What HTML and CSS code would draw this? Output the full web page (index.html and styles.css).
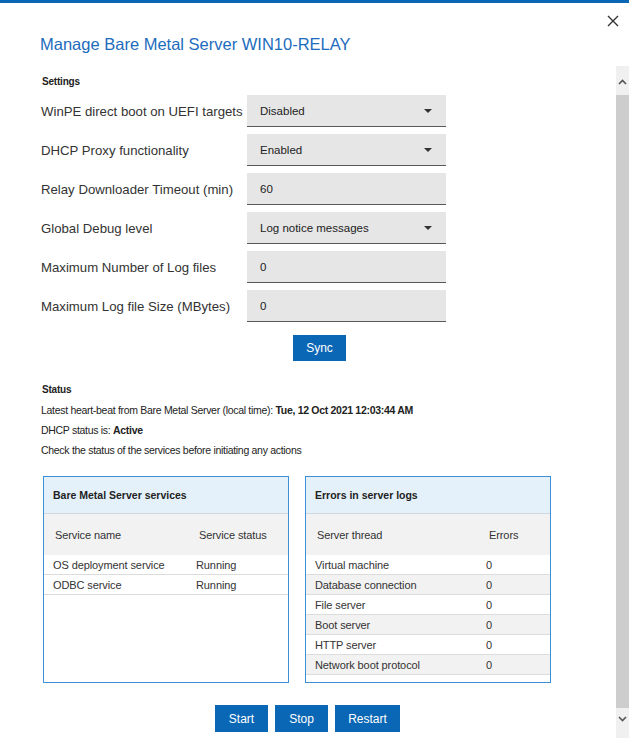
FILE: index.html
```html
<!DOCTYPE html>
<html>
<head>
<meta charset="utf-8">
<link rel="stylesheet" href="styles.css">
</head>
<body>
<div class="topbar"></div>
<div class="header">
  <h1 class="title">Manage Bare Metal Server WIN10-RELAY</h1>
  <button class="close" aria-label="Close">
    <svg width="12" height="12" viewBox="0 0 12 12"><path d="M1 1L11 11M11 1L1 11" stroke="#333" stroke-width="1.4" fill="none"/></svg>
  </button>
</div>
<div class="body">
  <div class="content">
    <div class="section-title">Settings</div>
    <div class="form">
      <div class="row"><span class="label">WinPE direct boot on UEFI targets</span><div class="field select">Disabled<span class="caret"></span></div></div>
      <div class="row"><span class="label">DHCP Proxy functionality</span><div class="field select">Enabled<span class="caret"></span></div></div>
      <div class="row"><span class="label">Relay Downloader Timeout (min)</span><div class="field">60</div></div>
      <div class="row"><span class="label">Global Debug level</span><div class="field select">Log notice messages<span class="caret"></span></div></div>
      <div class="row"><span class="label">Maximum Number of Log files</span><div class="field">0</div></div>
      <div class="row"><span class="label">Maximum Log file Size (MBytes)</span><div class="field">0</div></div>
    </div>
    <div class="sync-row"><button class="btn">Sync</button></div>

    <div class="section-title status-title">Status</div>
    <div class="line">Latest heart-beat from Bare Metal Server (local time): <b>Tue, 12 Oct 2021 12:03:44 AM</b></div>
    <div class="line">DHCP status is: <b>Active</b></div>
    <div class="line">Check the status of the services before initiating any actions</div>

    <div class="panels">
      <div class="panel svc">
        <div class="panel-head">Bare Metal Server services</div>
        <div class="thead"><span class="c1">Service name</span><span>Service status</span></div>
        <div class="tr"><span class="c1">OS deployment service</span><span>Running</span></div>
        <div class="tr"><span class="c1">ODBC service</span><span>Running</span></div>
      </div>
      <div class="panel err">
        <div class="panel-head">Errors in server logs</div>
        <div class="thead"><span class="c1">Server thread</span><span>Errors</span></div>
        <div class="tr"><span class="c1">Virtual machine</span><span>0</span></div>
        <div class="tr alt"><span class="c1">Database connection</span><span>0</span></div>
        <div class="tr"><span class="c1">File server</span><span>0</span></div>
        <div class="tr alt"><span class="c1">Boot server</span><span>0</span></div>
        <div class="tr"><span class="c1">HTTP server</span><span>0</span></div>
        <div class="tr alt"><span class="c1">Network boot protocol</span><span>0</span></div>
      </div>
    </div>

    <div class="actions">
      <button class="btn">Start</button>
      <button class="btn">Stop</button>
      <button class="btn wide">Restart</button>
    </div>
  </div>
  <div class="scrollbar">
    <div class="sb-arrow up"><svg width="9" height="6" viewBox="0 0 9 6"><path d="M1 5L4.5 1.5L8 5" stroke="#555" stroke-width="1.6" fill="none"/></svg></div>
    <div class="sb-thumb"></div>
    <div class="sb-arrow down"><svg width="9" height="6" viewBox="0 0 9 6"><path d="M1 1L4.5 4.5L8 1" stroke="#555" stroke-width="1.6" fill="none"/></svg></div>
  </div>
</div>
</body>
</html>
```
FILE: styles.css
```css
* { box-sizing: border-box; }
html, body { margin: 0; padding: 0; background: #fff; }
body {
  font-family: "Liberation Sans", Arial, sans-serif;
  color: #333;
  width: 629px;
  height: 738px;
  overflow: hidden;
}
.topbar { height: 3px; background: #0a67b5; }
.header {
  height: 63px;
  position: relative;
  padding: 30px 0 0 40px;
}
.title {
  margin: 0;
  font-weight: normal;
  font-size: 16.5px;
  line-height: 22px;
  color: #1d6cbd;
}
.close {
  position: absolute;
  right: 10px;
  top: 12px;
  border: 0;
  background: none;
  padding: 0;
  width: 12px;
  height: 12px;
  display: flex;
}
.body { display: flex; height: 672px; }
.content { flex: 1; padding: 10px 0 0 41px; }
.section-title {
  font-size: 10px;
  letter-spacing: -0.2px;
  font-weight: bold;
  line-height: 12px;
  color: #222;
  padding-left: 1px;
}
.form {
  display: flex;
  flex-direction: column;
  gap: 7px;
  margin-top: 7px;
}
.row { display: flex; align-items: center; height: 32px; }
.label { width: 206px; font-size: 13.2px; color: #333; white-space: nowrap; }
.field {
  width: 199px;
  height: 32px;
  background: #e6e6e6;
  border-bottom: 1.5px solid #595959;
  font-size: 11.5px;
  color: #222;
  padding: 0 0 0 13px;
  display: flex;
  align-items: center;
  position: relative;
}
.caret {
  position: absolute;
  right: 14px;
  top: 14px;
  width: 0; height: 0;
  border-left: 4px solid transparent;
  border-right: 4px solid transparent;
  border-top: 4px solid #333;
}
.sync-row { padding-left: 252px; margin-top: 13px; }
.btn {
  background: #0a67b5;
  color: #fff;
  border: 0;
  font-family: "Liberation Sans", Arial, sans-serif;
  font-size: 12px;
  width: 53px;
  height: 26px;
  padding: 0;
}
.status-title { margin-top: 23px; }
.line { font-size: 10.5px; letter-spacing: -0.3px; line-height: 20px; color: #222; }
.status-title + .line { margin-top: 4px; }
.line b { font-weight: bold; }
.panels {
  display: flex;
  gap: 16px;
  margin-top: 16px;
  padding-left: 2px;
}
.panel {
  width: 246px;
  height: 207px;
  border: 1px solid #3d8fd6;
}
.panel-head {
  height: 37px;
  background: #e4f1fb;
  border-bottom: 1px solid #cfd8e0;
  font-size: 10.5px;
  font-weight: bold;
  color: #222;
  padding-left: 9px;
  display: flex;
  align-items: center;
}
.thead {
  height: 41px;
  background: #f2f2f2;
  display: flex;
  align-items: center;
  font-size: 11px;
  letter-spacing: -0.1px;
  color: #333;
  padding-left: 11px;
}
.tr {
  height: 20px;
  display: flex;
  align-items: center;
  font-size: 11px;
  letter-spacing: -0.1px;
  color: #333;
  padding-left: 9px;
  border-bottom: 1.5px solid #dcdcdc;
  background: #fff;
}
.tr.alt { background: #f2f2f2; }
.svc .thead .c1 { width: 144px; }
.svc .tr .c1 { width: 143px; }
.err .thead .c1 { width: 172px; }
.err .tr .c1 { width: 171px; }
.actions {
  display: flex;
  gap: 7px;
  padding-left: 174px;
  margin-top: 22px;
}
.actions .btn { height: 27px; }
.actions .btn.wide { width: 65px; }
.scrollbar {
  width: 13px;
  display: flex;
  flex-direction: column;
  background: #f0f0f0;
}
.sb-arrow {
  height: 29px;
  display: flex;
  align-items: center;
  justify-content: center;
  background: #f0f0f0;
}
.sb-arrow.up { align-items: flex-end; padding-bottom: 10px; }
.sb-arrow.down { align-items: flex-start; padding-top: 8px; height: 30px; }
.sb-thumb { flex: 1; background: #cdcdcd; }
```
